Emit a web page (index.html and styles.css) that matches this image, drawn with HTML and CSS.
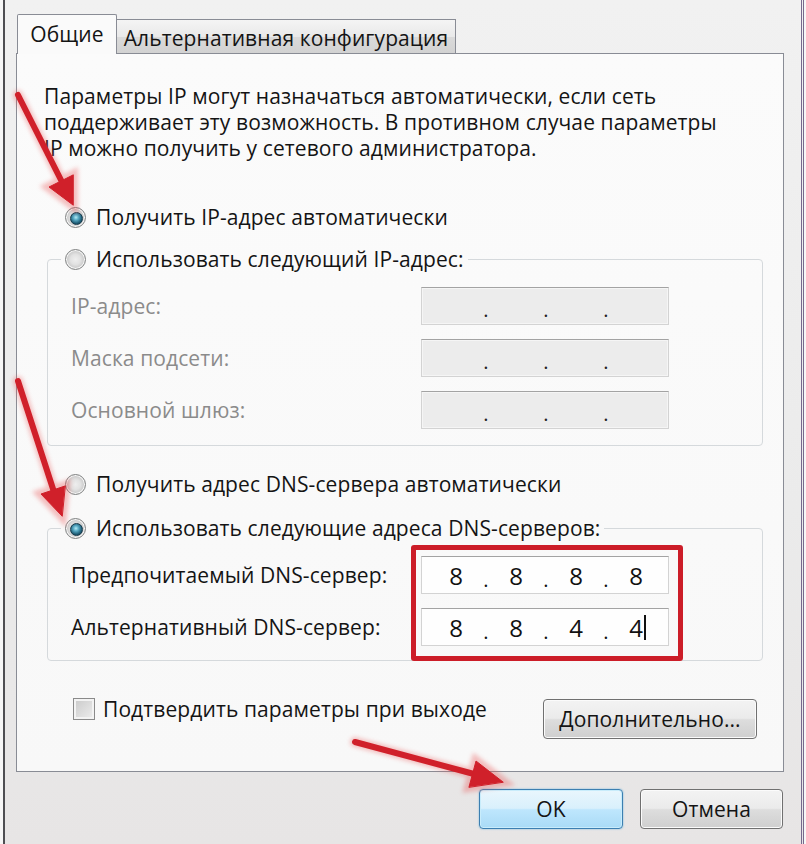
FILE: index.html
```html
<!DOCTYPE html>
<html lang="ru">
<head>
<meta charset="utf-8">
<title>Свойства: IP версии 4</title>
<link rel="stylesheet" href="styles.css">
</head>
<body>
<div class="window">
  <div class="tabs">
    <div class="tab active">Общие</div>
    <div class="tab inactive">Альтернативная конфигурация</div>
  </div>
  <div class="panel">
    <p class="intro">Параметры IP могут назначаться автоматически, если сеть<br>поддерживает эту возможность. В противном случае параметры<br>IP можно получить у сетевого администратора.</p>

    <div class="option first"><span class="radio checked"></span><span>Получить IP-адрес автоматически</span></div>

    <fieldset class="group group-ip">
      <legend class="option"><span class="radio"></span><span>Использовать следующий IP-адрес:</span></legend>
      <div class="fields">
        <span class="label disabled">IP-адрес:</span>
        <div class="ipbox off"><span></span><span class="dot">.</span><span></span><span class="dot">.</span><span></span><span class="dot">.</span><span></span></div>
        <span class="label disabled">Маска подсети:</span>
        <div class="ipbox off"><span></span><span class="dot">.</span><span></span><span class="dot">.</span><span></span><span class="dot">.</span><span></span></div>
        <span class="label disabled">Основной шлюз:</span>
        <div class="ipbox off"><span></span><span class="dot">.</span><span></span><span class="dot">.</span><span></span><span class="dot">.</span><span></span></div>
      </div>
    </fieldset>

    <div class="option dns-auto"><span class="radio"></span><span>Получить адрес DNS-сервера автоматически</span></div>

    <fieldset class="group group-dns">
      <legend class="option"><span class="radio checked"></span><span>Использовать следующие адреса DNS-серверов:</span></legend>
      <div class="fields">
        <span class="label">Предпочитаемый DNS-сервер:</span>
        <div class="ipbox on"><span>8</span><span class="dot">.</span><span>8</span><span class="dot">.</span><span>8</span><span class="dot">.</span><span>8</span></div>
        <span class="label">Альтернативный DNS-сервер:</span>
        <div class="ipbox on"><span>8</span><span class="dot">.</span><span>8</span><span class="dot">.</span><span>4</span><span class="dot">.</span><span class="caret-cell">4<i class="caret"></i></span></div>
      </div>
    </fieldset>

    <div class="footer-row">
      <label class="check"><span class="checkbox"></span><span>Подтвердить параметры при выходе</span></label>
      <button class="btn advanced">Дополнительно...</button>
    </div>

    <div class="highlight"></div>
  </div>
  <div class="buttons">
    <button class="btn ok">OK</button>
    <button class="btn cancel">Отмена</button>
  </div>
</div>

<svg class="arrows" width="806" height="844" viewBox="0 0 806 844" xmlns="http://www.w3.org/2000/svg">
  <g class="glow" stroke="#e85050" stroke-width="10" stroke-linecap="round" fill="#e85050" opacity="0.35">
    <line x1="18" y1="95" x2="62" y2="182"/>
    <polygon points="73,205 49,187 73,175"/>
    <line x1="18" y1="381" x2="54" y2="492"/>
    <polygon points="62,516 41,494 65,486"/>
    <line x1="355" y1="742" x2="474" y2="774"/>
    <polygon points="503,782 476,761 469,787"/>
  </g>
  <g stroke="#d0202a" stroke-width="6" stroke-linecap="round" fill="#d0202a">
    <line x1="18" y1="95" x2="62" y2="182"/>
    <polygon points="73,205 49,187 73,175" stroke-width="1"/>
    <line x1="18" y1="381" x2="54" y2="492"/>
    <polygon points="62,516 41,494 65,486" stroke-width="1"/>
    <line x1="355" y1="742" x2="474" y2="774"/>
    <polygon points="503,782 476,761 469,787" stroke-width="1"/>
  </g>
</svg>
</body>
</html>
```

FILE: styles.css
```css
* { box-sizing: border-box; }

html, body {
  margin: 0;
  padding: 0;
  background: #f6f6f6;
}

body {
  position: relative;
  width: 806px;
  height: 844px;
  overflow: hidden;
  font-family: "Open Sans", "Noto Sans", "DejaVu Sans", sans-serif;
  font-size: 21px;
  letter-spacing: 0.1px;
  color: #141414;
}

.window {
  margin-left: 3px;
  width: 801px;
  height: 844px;
  border-left: 2px solid #4e4e52;
  border-right: 3px double #76698e;
  background: linear-gradient(#f1f1f1, #ebebeb 60%, #e7e5e5);
}

/* Tabs */
.tabs {
  display: flex;
  align-items: flex-end;
  padding: 14px 0 0 12px;
  margin-bottom: -1px;
  position: relative;
  z-index: 2;
}

.tab {
  display: flex;
  align-items: center;
  justify-content: center;
  border: 1px solid #898c95;
  border-bottom: none;
  white-space: nowrap;
}

.tab.active {
  width: 100px;
  height: 40px;
  background: #fafafa;
  padding-bottom: 2px;
  border-radius: 2px 2px 0 0;
}

.tab.inactive {
  width: 339px;
  height: 34px;
  margin-bottom: 1px;
  border-left: none;
  background: linear-gradient(#f4f4f4, #e9e9e9 50%, #dadada 51%, #d2d2d2);
  padding-top: 2px;
}

/* Panel */
.panel {
  position: relative;
  margin-left: 11px;
  width: 768px;
  height: 719px;
  border: 1px solid #898c95;
  background: linear-gradient(#fbfbfb, #f8f8f8);
  padding: 29px 20px 0 27px;
}

.intro {
  margin: 0;
  line-height: 26px;
}

.option {
  display: flex;
  align-items: center;
  gap: 10px;
  height: 26px;
  line-height: 26px;
  white-space: nowrap;
}

.option.first {
  margin: 43px 0 0 21px;
}

.option.dns-auto {
  margin: 25px 0 0 21px;
}

.radio {
  flex: none;
  position: relative;
  width: 21px;
  height: 21px;
  border-radius: 50%;
  border: 1px solid #7f8181;
  background: radial-gradient(circle at 50% 50%, #eeeeee 0, #e2e2e2 5px, #cfcfcf 8px, #e9e9e9 10px);
  box-shadow: inset 0 0 0 1px #f7f7f7;
}

.radio.checked::after {
  content: "";
  position: absolute;
  left: 4px;
  top: 4px;
  width: 11px;
  height: 11px;
  border-radius: 50%;
  border: 1px solid #16394a;
  background: radial-gradient(circle at 45% 40%, #b4ecf6 0, #56a9c3 30%, #1f5d76 65%, #10384a 100%);
}

/* Group boxes */
.group {
  margin: 0 0 0 3px;
  width: 716px;
  border: 1px solid #d5d9dc;
  border-radius: 4px;
  padding: 0 0 16px 13px;
  min-width: 0;
}

.group-ip {
  margin-top: 16px;
}

.group-dns {
  margin-top: 18px;
  padding-bottom: 14px;
}

.group legend {
  padding: 0 4px;
}

.fields {
  display: grid;
  grid-template-columns: 350px 248px;
  grid-auto-rows: 38px;
  row-gap: 14px;
  margin-top: 15px;
  padding-left: 10px;
  align-items: center;
}

.label {
  white-space: nowrap;
}

.label.disabled {
  color: #8b8b8b;
}

.ipbox {
  height: 38px;
  display: grid;
  grid-template-columns: repeat(7, 30px);
  padding-left: 19px;
  align-items: center;
  justify-items: center;
  border: 1px solid #d3d3d3;
  border-top-color: #a3a3a3;
  letter-spacing: 0;
}

.ipbox.off {
  background: #ececec;
  box-shadow: inset 0 0 0 1px #f5f5f5;
}

.ipbox.off .dot {
  font-size: 20px;
  color: #222;
  padding-top: 6px;
}

.ipbox.on {
  background: #fefefe;
  font-size: 24px;
  color: #111;
}

.ipbox.on .dot {
  font-size: 20px;
  padding-top: 8px;
}

.caret-cell {
  position: relative;
}

.caret {
  position: absolute;
  right: -3px;
  top: 4px;
  width: 2px;
  height: 25px;
  background: #111;
}

/* Footer row */
.footer-row {
  display: flex;
  justify-content: space-between;
  align-items: flex-start;
  margin-top: 38px;
  padding: 0 6px 0 29px;
}

.check {
  display: flex;
  align-items: center;
  gap: 8px;
  height: 22px;
  margin-top: -1px;
  white-space: nowrap;
}

.checkbox {
  flex: none;
  width: 22px;
  height: 22px;
  border: 1px solid #8a8a8a;
  background: linear-gradient(135deg, #c9c9c9, #eeeeee);
  box-shadow: inset 0 0 0 2px #f3f3f3;
}

.btn {
  font-family: inherit;
  font-size: 21px;
  letter-spacing: 0.1px;
  color: #141414;
  height: 40px;
  border: 1px solid #707070;
  border-radius: 4px;
  background: linear-gradient(#f3f3f3, #ebebeb 48%, #dddddd 52%, #cfcfcf);
  box-shadow: inset 0 0 0 1px #fbfbfb;
  padding: 0;
}

.btn.advanced {
  width: 214px;
}

.highlight {
  position: absolute;
  left: 394px;
  top: 491px;
  width: 272px;
  height: 116px;
  border: 5px solid #cc1d28;
  border-radius: 3px;
  pointer-events: none;
}

/* Bottom buttons */
.buttons {
  display: flex;
  justify-content: flex-end;
  gap: 17px;
  padding: 17px 18px 0 0;
}

.btn.ok {
  width: 144px;
  border-color: #3c7fb1;
  background: linear-gradient(#e9f6fd, #d9f0fc 48%, #bee6fd 52%, #a9dbf6);
  box-shadow: inset 0 0 0 1px #c8ecfb, 0 0 2px #6fb6dd;
}

.btn.cancel {
  width: 143px;
}

.arrows {
  position: absolute;
  left: 0;
  top: 0;
  pointer-events: none;
}

.arrows .glow {
  filter: blur(2px);
}
```
